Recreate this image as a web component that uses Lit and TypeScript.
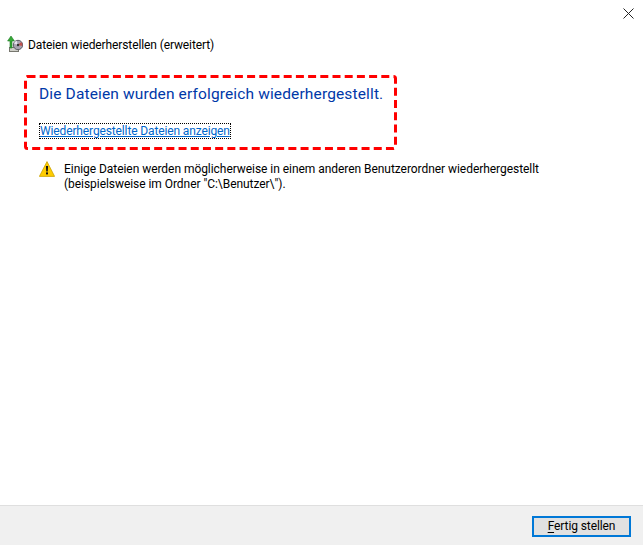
import { LitElement, html, css } from "lit";
import { customElement } from "lit/decorators.js";

@customElement("app-root")
export class AppRoot extends LitElement {
  static styles = css`
    :host { display: block; width: 643px; height: 545px; background: #fff; font-family: Roboto, "Noto Sans", sans-serif; font-size: 12px; color: #000; }
    .win { width: 643px; height: 545px; display: flex; flex-direction: column; }
    .top { height: 28px; display: flex; justify-content: flex-end; padding: 8px 8px 0 0; box-sizing: border-box; }
    .close { width: 11px; height: 11px; display: block; margin-right: 1px; }
    .title { height: 24px; margin-top: 5px; padding-left: 7px; display: flex; align-items: center; gap: 5px; letter-spacing: -0.11px; }
    .title svg { width: 16px; height: 18px; flex: none; }
    .main { flex: 1; padding: 0 0 0 24px; }
    .box { position: relative; margin-top: 18px; width: 373px; height: 75px; box-sizing: border-box; padding: 8px 0 0 15px; }
    .dash { position: absolute; left: 0; top: 0; width: 373px; height: 75px; }
    h1 { margin: 0; font-weight: 400; font-size: 15.5px; line-height: 22px; color: #0038a8; letter-spacing: 0.14px; }
    .link { display: inline-block; margin: 19px 0 0 1px; font-size: 12px; line-height: 14px; color: #0066cc; text-decoration: underline; outline: 1px dotted #000; outline-offset: 0; letter-spacing: -0.13px; }
    .warn { margin: 11px 0 0 15px; display: flex; gap: 9px; }
    .warn svg { width: 16px; height: 16px; flex: none; }
    .warn p { margin: 1px 0 0; line-height: 15px; width: 520px; letter-spacing: -0.05px; }
    .foot { height: 40px; box-sizing: border-box; background: #f0f0f0; border-top: 1px solid #dfdfdf; display: flex; justify-content: flex-end; padding: 10px 12px 0 0; }
    button { width: 99px; height: 21px; box-sizing: border-box; border: 2px solid #0078d7; background: #e1e1e1; font: inherit; color: #000; padding: 0; line-height: 15px; letter-spacing: -0.1px; }
    u { text-underline-offset: 2px; }
  `;

  render() {
    return html`
      <div class="win">
        <div class="top">
          <svg class="close" viewBox="0 0 11 11"><path d="M.5.5l10 10M10.5.5l-10 10" stroke="#222" stroke-width="1" fill="none"/></svg>
        </div>
        <div class="title">
          <svg viewBox="0 0 16 18">
            <rect x="2.5" y="11.5" width="9" height="4" fill="#cfcfc8" stroke="#77776f" stroke-width="1"/>
            <circle cx="11" cy="9" r="4.7" fill="#a7a2b0" stroke="#5c5c64" stroke-width="1"/>
            <path d="M11 9L14.2 6A4.4 4.4 0 0 1 15.3 10Z" fill="#c0504d"/>
            <path d="M11 9L7 7.4A4.4 4.4 0 0 1 9.6 4.8Z" fill="#e8e4ef"/>
            <circle cx="11" cy="9" r="1.2" fill="#333"/>
            <path d="M3 12V5H.6L4 0 7.4 5H5V12Z" fill="#35a836" stroke="#1d7a24" stroke-width=".6"/>
          </svg>
          <span>Dateien wiederherstellen (erweitert)</span>
        </div>
        <div class="main">
          <div class="box">
            <svg class="dash" viewBox="0 0 373 75"><rect x="1.5" y="1.5" width="370" height="72" rx="2" fill="none" stroke="#f00" stroke-width="3" stroke-dasharray="8 4.2"/></svg>
            <h1>Die Dateien wurden erfolgreich wiederhergestellt.</h1>
            <a class="link">Wiederhergestellte Dateien anzeigen</a>
          </div>
          <div class="warn">
            <svg viewBox="0 0 16 16">
              <path d="M8 .6L15.6 15.4H.4Z" fill="#ffcc00" stroke="#c9a100" stroke-width=".8" stroke-linejoin="round"/>
              <path d="M6.9 5h2.2l-.4 5.6H7.3Z" fill="#111"/><rect x="7" y="11.4" width="2" height="2" fill="#111"/>
            </svg>
            <p>Einige Dateien werden möglicherweise in einem anderen Benutzerordner wiederhergestellt<br>(beispielsweise im Ordner "C:\\Benutzer\\").</p>
          </div>
        </div>
        <div class="foot"><button><u>F</u>ertig stellen</button></div>
      </div>
    `;
  }
}
